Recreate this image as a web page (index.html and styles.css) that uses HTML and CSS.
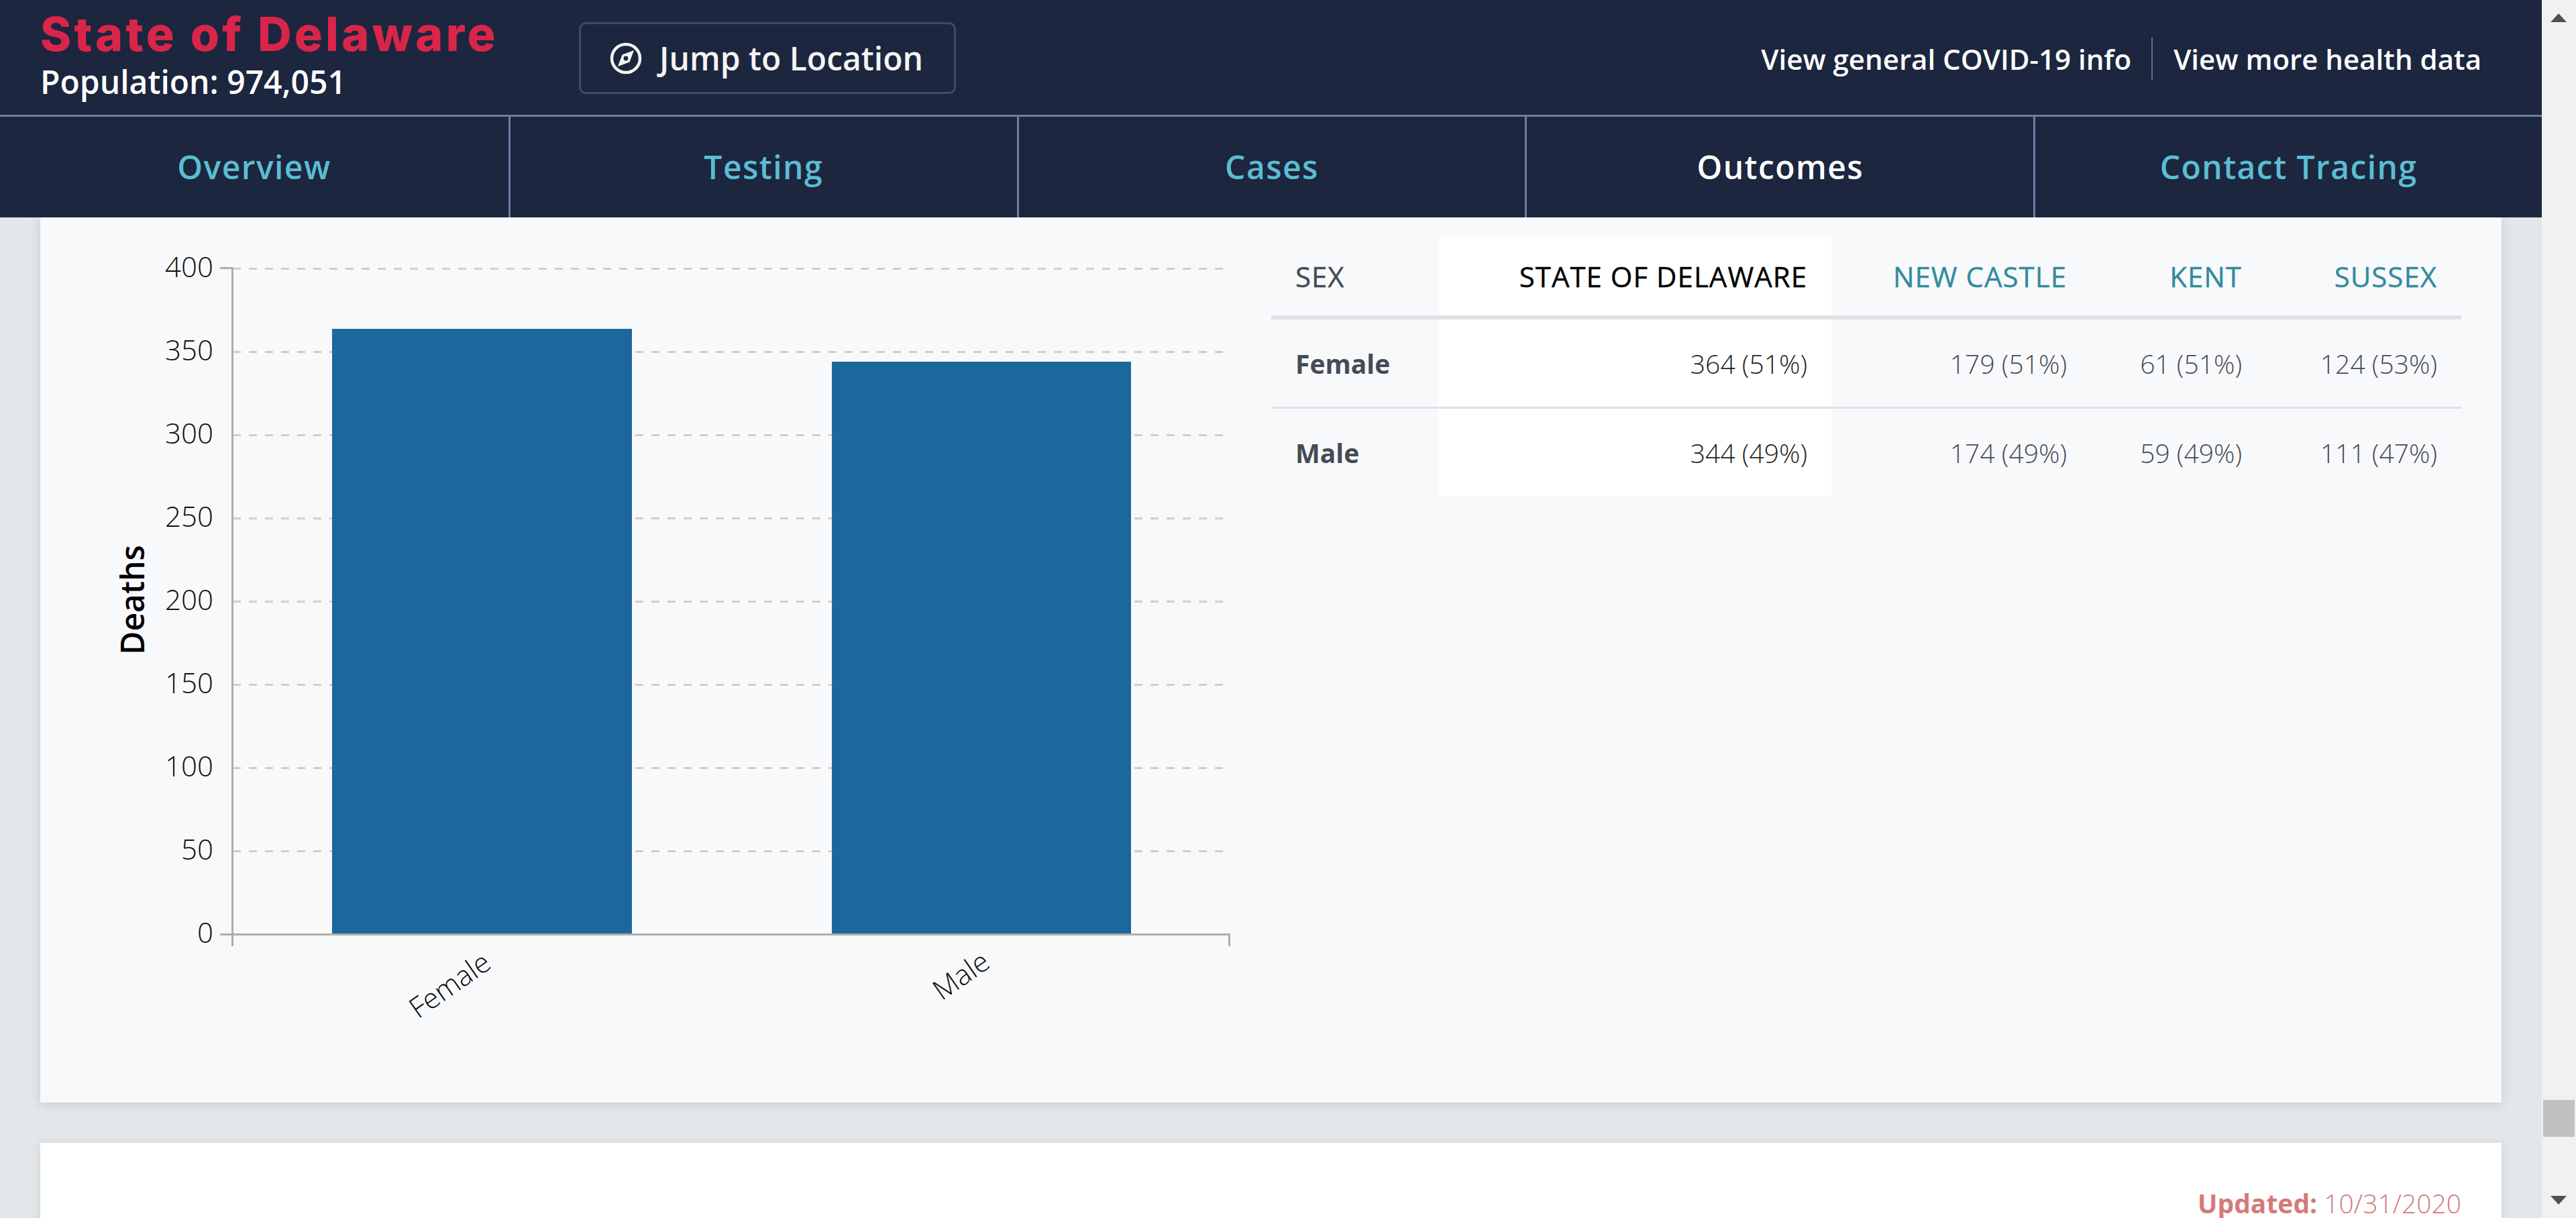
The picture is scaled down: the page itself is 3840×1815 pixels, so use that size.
FILE: index.html
```html
<!DOCTYPE html>
<html lang="en">
<head>
<meta charset="utf-8">
<title>State of Delaware</title>
<link rel="stylesheet" href="styles.css">
</head>
<body>
<div class="page">
  <div class="main">
    <header class="topbar">
      <div class="place">
        <h1 class="place-name">State of Delaware</h1>
        <div class="place-pop">Population: 974,051</div>
      </div>
      <button class="jump" type="button">
        <svg class="jump-icon" viewBox="0 0 48 48" aria-hidden="true">
          <circle cx="24" cy="24" r="21" fill="none" stroke="#f4f4f4" stroke-width="4.5"/>
          <path fill="#f4f4f4" fill-rule="evenodd" d="M36 12 L29.5 29.5 L12 36 L18.5 18.5 Z M24 20.6 A3.4 3.4 0 1 0 24 27.4 A3.4 3.4 0 1 0 24 20.6 Z"/>
        </svg>
        <span>Jump to Location</span>
      </button>
      <nav class="links">
        <a class="link link-first">View general COVID-19 info</a>
        <a class="link">View more health data</a>
      </nav>
    </header>
    <nav class="tabs">
      <a class="tab">Overview</a>
      <a class="tab">Testing</a>
      <a class="tab">Cases</a>
      <a class="tab tab-active">Outcomes</a>
      <a class="tab">Contact Tracing</a>
    </nav>
    <div class="content">
      <section class="card">
        <svg class="chart" viewBox="60 324 1775 1319" width="1775" height="1319">
          <g class="grid">
            <line x1="347" x2="1826" y1="400.5" y2="400.5"/>
            <line x1="347" x2="1826" y1="524.5" y2="524.5"/>
            <line x1="347" x2="1826" y1="648.5" y2="648.5"/>
            <line x1="347" x2="1826" y1="772.5" y2="772.5"/>
            <line x1="347" x2="1826" y1="896.5" y2="896.5"/>
            <line x1="347" x2="1826" y1="1020.5" y2="1020.5"/>
            <line x1="347" x2="1826" y1="1144.5" y2="1144.5"/>
            <line x1="347" x2="1826" y1="1268.5" y2="1268.5"/>
          </g>
          <rect class="bar" x="495" y="490" width="447" height="901"/>
          <rect class="bar" x="1240" y="539" width="446" height="852"/>
          <g class="axis">
            <path d="M328 399.5 H346.5 V1410"/>
            <path d="M328 1392.5 H1832.5 V1410"/>
          </g>
          <g class="tick-y">
            <text x="318" y="413">400</text>
            <text x="318" y="537">350</text>
            <text x="318" y="661">300</text>
            <text x="318" y="785">250</text>
            <text x="318" y="909">200</text>
            <text x="318" y="1033">150</text>
            <text x="318" y="1157">100</text>
            <text x="318" y="1281">50</text>
            <text x="318" y="1405">0</text>
          </g>
          <text class="axis-title" transform="translate(215 894) rotate(-90)">Deaths</text>
          <text class="tick-x" transform="translate(679 1480) rotate(-35)">Female</text>
          <text class="tick-x" transform="translate(1441 1466) rotate(-35)">Male</text>
        </svg>
        <table class="data">
          <thead>
            <tr>
              <th class="c1">SEX</th>
              <th class="c2 state">STATE OF DELAWARE</th>
              <th class="c3 county">NEW CASTLE</th>
              <th class="c4 county">KENT</th>
              <th class="c5 county">SUSSEX</th>
            </tr>
          </thead>
          <tbody>
            <tr>
              <td class="label">Female</td>
              <td class="state">364 (51%)</td>
              <td>179 (51%)</td>
              <td>61 (51%)</td>
              <td>124 (53%)</td>
            </tr>
            <tr>
              <td class="label">Male</td>
              <td class="state">344 (49%)</td>
              <td>174 (49%)</td>
              <td>59 (49%)</td>
              <td>111 (47%)</td>
            </tr>
          </tbody>
        </table>
      </section>
      <section class="card-next">
        <p class="updated"><b>Updated:</b> 10/31/2020</p>
      </section>
    </div>
  </div>
  <div class="scrollbar">
    <span class="arrow arrow-up"></span>
    <span class="thumb"></span>
    <span class="arrow arrow-down"></span>
  </div>
</div>
</body>
</html>
```
FILE: styles.css
```css
* { box-sizing: border-box; }
html, body { margin: 0; height: 100%; overflow: hidden; }
body { font-family: "Open Sans", "Noto Sans", sans-serif; background: #e3e7ea; }
.page { display: flex; width: 3840px; height: 1815px; }
.main { width: 3789px; height: 1815px; display: flex; flex-direction: column; overflow: hidden; }

.topbar { height: 174px; flex: none; display: flex; align-items: flex-start; background: #1c263e; border-bottom: 3px solid #6b7fa8; padding-left: 60px; }
.place { width: 803px; padding-top: 10px; }
.place-name { margin: 0; font-family: Inter, sans-serif; font-weight: 800; font-size: 70px; letter-spacing: 4.3px; line-height: 82px; color: #d9254a; white-space: nowrap; }
.place-pop { font-weight: 600; font-size: 48px; line-height: 60px; color: #fff; white-space: nowrap; }
.jump { margin-top: 33px; width: 562px; height: 107px; display: flex; align-items: center; gap: 26px; padding: 0 0 0 43px; background: none; border: 3px solid #3d4c6b; border-radius: 10px; font-family: inherit; font-weight: 600; font-size: 48px; color: #f4f4f4; white-space: nowrap; }
.jump-icon { width: 48px; height: 48px; flex: none; }
.links { margin-left: auto; margin-top: 56px; display: flex; padding-right: 90px; }
.link { height: 63px; display: flex; align-items: center; font-weight: 600; font-size: 42px; color: #fff; white-space: nowrap; }
.link-first { padding-right: 30px; margin-right: 31px; border-right: 2px solid #5c6c96; }

.tabs { height: 150px; flex: none; display: grid; grid-template-columns: repeat(5, 1fr); background: #1c263e; }
.tab { display: flex; align-items: center; justify-content: center; font-weight: 600; font-size: 48px; letter-spacing: 1.44px; color: #5bbdd3; border-left: 3px solid #6b7fa8; padding-bottom: 2px; }
.tab:first-child { border-left: 0; }
.tab-active { color: #fff; }

.content { flex: 1; min-height: 0; overflow: hidden; padding: 0 60px; }
.card { height: 1319px; display: flex; align-items: flex-start; background: #f8f9fb; box-shadow: 0 2px 14px rgba(90, 100, 120, .22); }
.chart { display: block; flex: none; }
.grid line { stroke: #d2cfcb; stroke-width: 3; stroke-dasharray: 12 12; }
.bar { fill: #1c689c; }
.axis path { fill: none; stroke: #b3aca7; stroke-width: 3; }
.tick-y text { font-weight: 300; font-size: 42px; fill: #111; text-anchor: end; }
.axis-title { font-weight: 600; font-size: 48px; fill: #000; text-anchor: middle; }
.tick-x { font-weight: 300; font-size: 42px; fill: #111; text-anchor: middle; }

.data { margin: 29px 0 0 60px; width: 1774px; border-collapse: separate; border-spacing: 0; table-layout: fixed; font-size: 39px; color: #454b55; }
.c1 { width: 250px; }
.c2 { width: 585px; }
.c3 { width: 387px; }
.c4 { width: 261px; }
.c5 { width: 291px; }
.data th { height: 123px; padding: 0 36px; font-weight: 400; font-size: 42px; letter-spacing: 1px; -webkit-text-stroke: .4px currentColor; text-align: right; border-bottom: 6px solid #dfe1e6; white-space: nowrap; }
.data th.c1 { text-align: left; }
.data td { height: 130px; padding: 0 36px; font-weight: 300; text-align: right; white-space: nowrap; }
.data tbody tr:first-child td { height: 133px; border-bottom: 3px solid #dfe1e6; }
.data th.state { background: #fff; color: #000; }
.data td.state { background: #fff; color: #222; }
.data th.county { color: #338b9e; }
.data td.label { font-weight: 700; text-align: left; }

.card-next { margin-top: 60px; height: 300px; background: #fff; box-shadow: 0 2px 14px rgba(90, 100, 120, .16); padding: 62px 60px 0 0; }
.updated { margin: 0; text-align: right; font-weight: 300; font-size: 39px; line-height: 56px; color: #d47a7a; }
.updated b { font-weight: 700; }

.scrollbar { width: 51px; height: 1815px; position: relative; background: #f1f1f1; }
.thumb { position: absolute; left: 2px; top: 1639px; width: 47px; height: 55px; background: #c1c1c1; }
.arrow { position: absolute; left: 13px; width: 0; height: 0; border-left: 12.5px solid transparent; border-right: 12.5px solid transparent; }
.arrow-up { top: 20px; border-bottom: 13px solid #505050; }
.arrow-down { top: 1782px; border-top: 13px solid #505050; }
```
